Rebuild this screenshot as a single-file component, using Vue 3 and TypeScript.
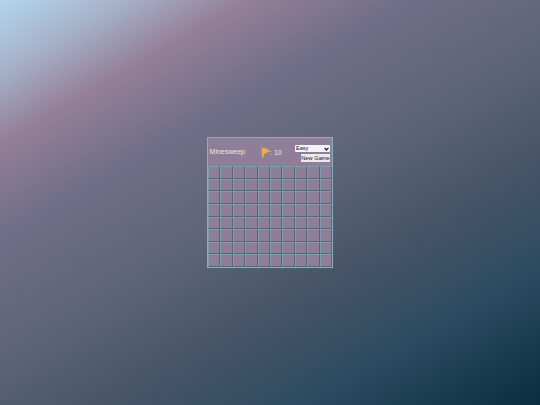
<script setup lang="ts">
const cells: number[] = Array.from({ length: 80 }, (_, i) => i)
</script>

<template>
  <div class="page">
    <div class="board">
      <header class="head">
        <span class="title">Minesweep</span>
        <div class="flags">
          <svg class="flag" viewBox="0 0 9 11" width="9" height="11">
            <path d="M0.5 0.5 L5 1.4 L8.8 3.4 L8.6 4.4 L3 7.2 L2.4 10.6 L1 10.6 Z" fill="#e6b046" />
          </svg>
          <span>: 10</span>
        </div>
        <div class="controls">
          <div class="level-wrap">
            <select class="level">
              <option>Easy</option>
              <option>Medium</option>
              <option>Hard</option>
            </select>
            <svg class="arrow" viewBox="0 0 5 4" width="5" height="4">
              <path d="M0.6 0.8 L2.5 3 L4.4 0.8" fill="none" stroke="#1c1c24" stroke-width="1.2" />
            </svg>
          </div>
          <button class="new">New Game</button>
        </div>
      </header>
      <div class="grid">
        <div v-for="c in cells" :key="c" class="cell"></div>
      </div>
    </div>
  </div>
</template>

<style scoped>
.page {
  width: 540px;
  height: 405px;
  display: flex;
  align-items: center;
  justify-content: center;
  overflow: hidden;
  background: linear-gradient(150deg, #b2d6ec 0%, #a6b2ca 10%, #947f98 20%, #706e88 33%, #5d6478 50%, #465468 66%, #2c4b60 81%, #1c3c50 90%, #0c2c40 100%);
}
.board {
  width: 126px;
  display: flex;
  flex-direction: column;
  background: #8f7e98;
  border: 1px solid #8fabbe;
  box-sizing: border-box;
}
.head {
  height: 28px;
  display: flex;
  align-items: center;
  padding: 0 2px 0 1px;
  color: #e8e4ec;
  font-family: "Liberation Sans", Arial, sans-serif;
  font-size: 7px;
}
.title {
  width: 52px;
  padding: 0 0 1px 0.6px;
  box-sizing: border-box;
}
.flags {
  display: flex;
  align-items: center;
  gap: 0;
}
.flag {
  display: block;
}
.controls {
  margin-left: auto;
  display: flex;
  flex-direction: column;
  align-items: flex-end;
  gap: 2px;
  padding-top: 3px;
}
.level-wrap {
  position: relative;
  width: 35px;
  height: 7px;
}
.level {
  display: block;
  width: 35px;
  height: 7px;
  padding: 0 0 0 1px;
  border: 0;
  border-radius: 1px;
  appearance: none;
  background: #f3f2f5;
  color: #111118;
  font-family: "Liberation Sans", Arial, sans-serif;
  font-size: 5.5px;
  line-height: 7px;
}
.arrow {
  position: absolute;
  right: 1px;
  top: 1.5px;
  pointer-events: none;
}
.new {
  display: block;
  height: 8px;
  width: 29px;
  padding: 0;
  border: 0;
  background: #ece9ee;
  color: #111118;
  font-family: "Liberation Sans", Arial, sans-serif;
  font-size: 5.7px;
  line-height: 8px;
  white-space: nowrap;
}
.grid {
  display: grid;
  grid-template-columns: repeat(10, 1fr);
  grid-auto-rows: 12.6px;
}
.cell {
  box-sizing: border-box;
  background: #8f7e98;
  border-top: 1px solid #7f9db3;
  border-left: 1px solid #7f9db3;
  border-right: 1px solid #56677c;
  border-bottom: 1px solid #56677c;
}
</style>
